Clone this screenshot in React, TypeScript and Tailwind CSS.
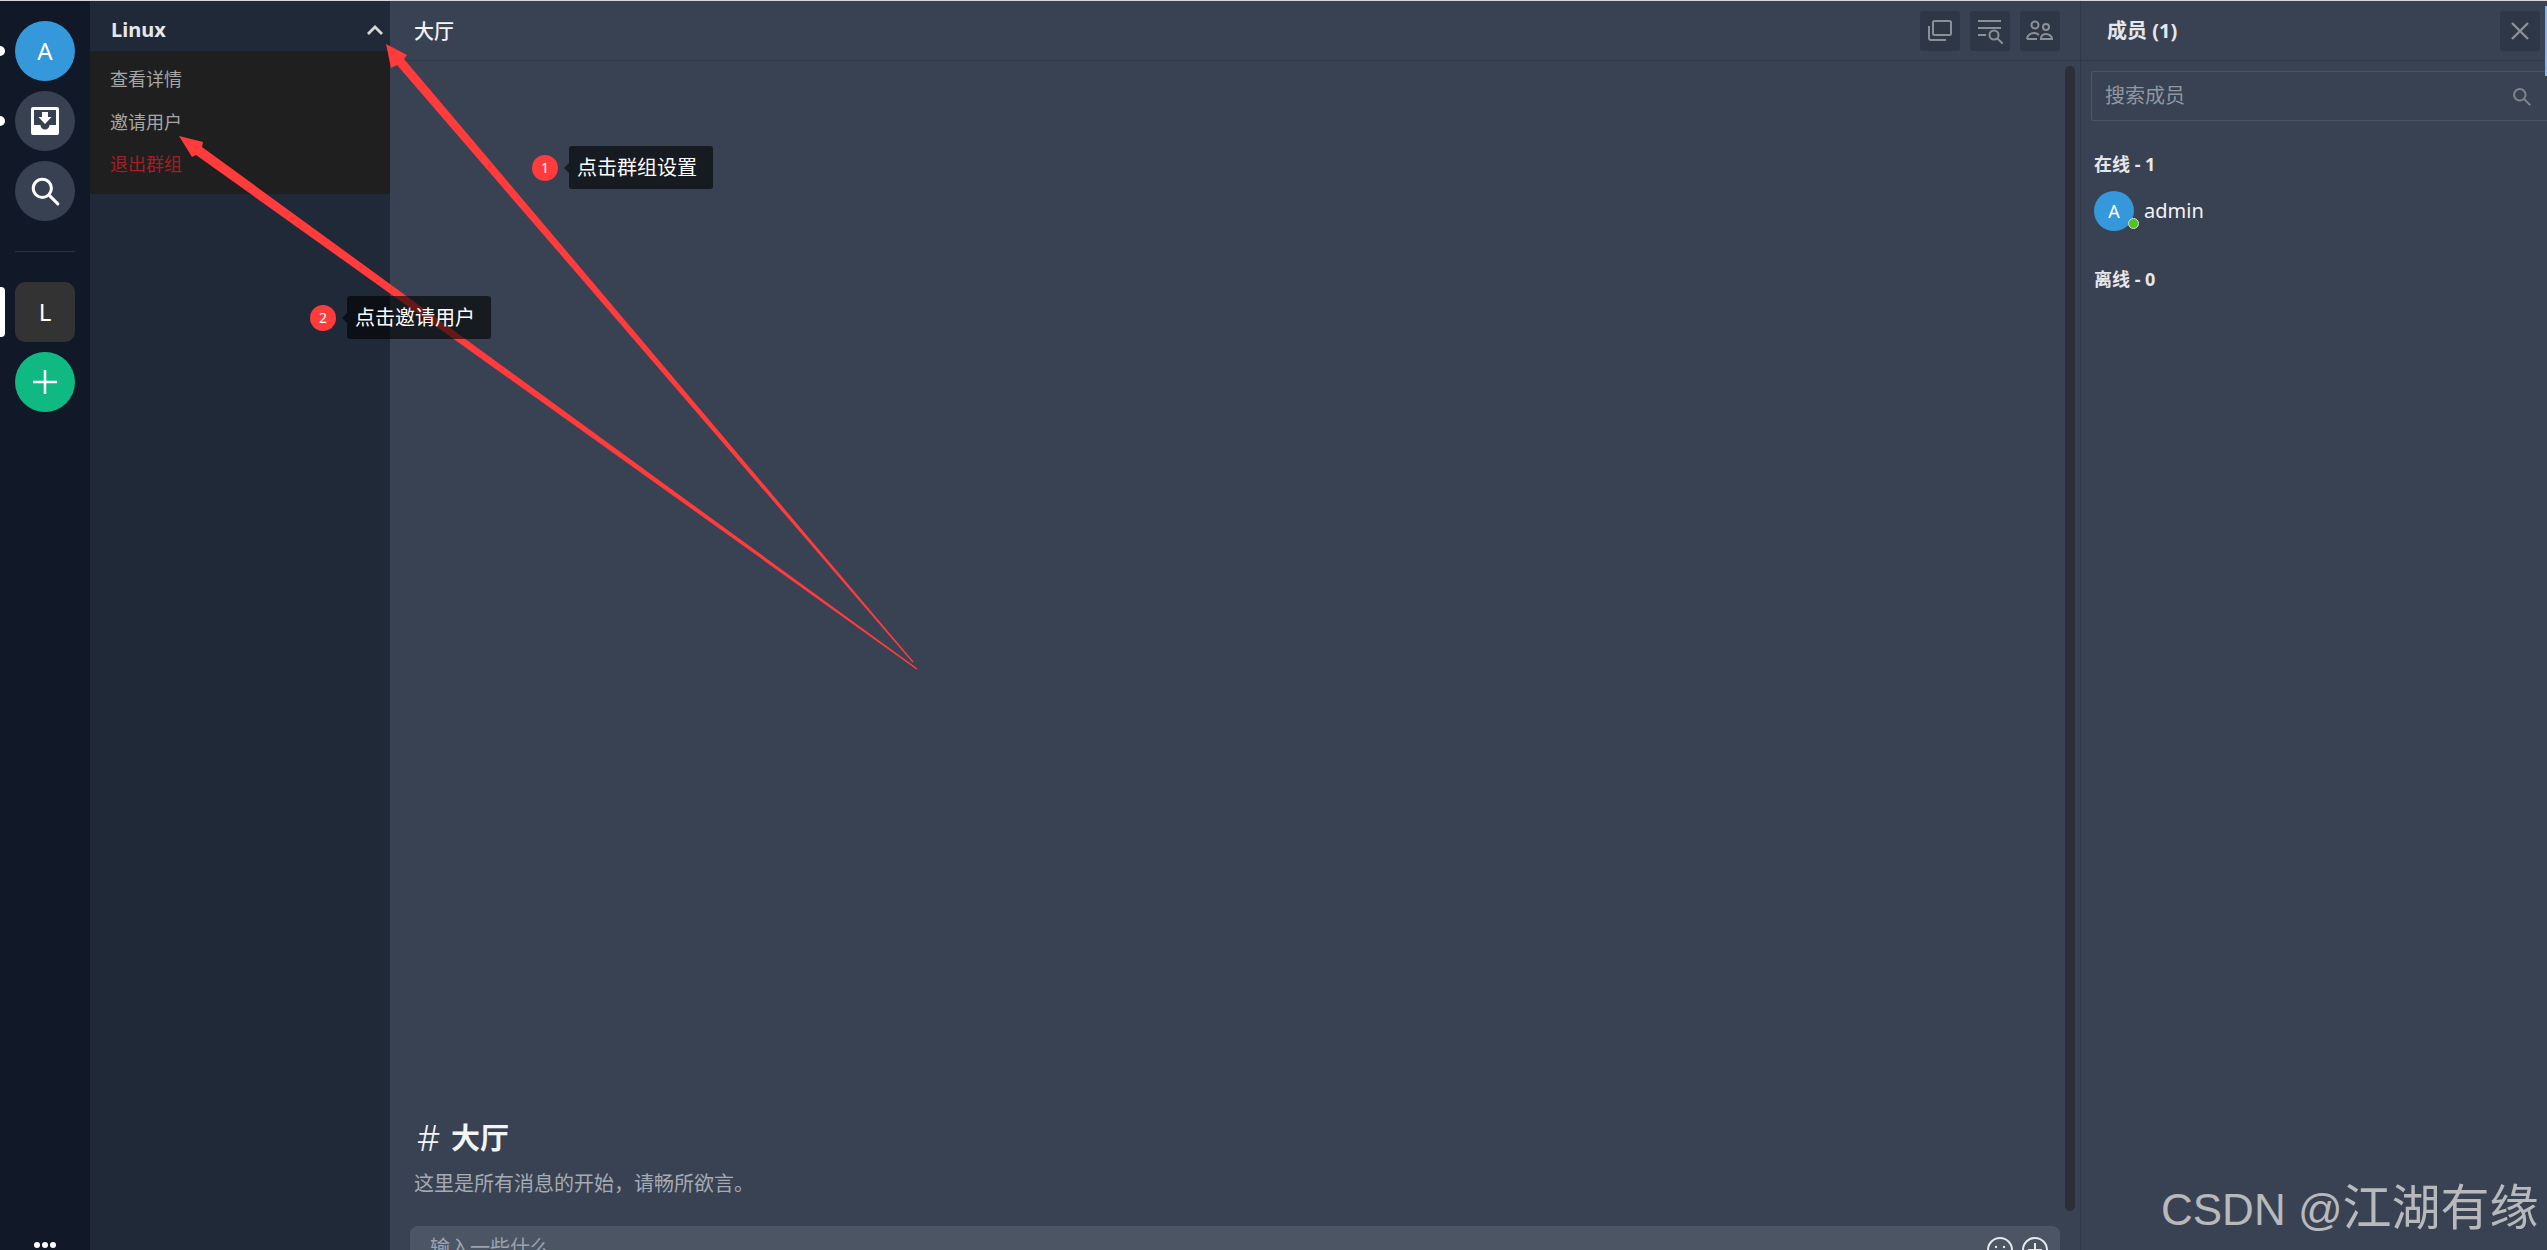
const FONT = '"Noto Sans", "Noto Sans CJK SC", sans-serif';

function InboxIcon() {
  return (
    <svg width="30" height="30" viewBox="0 0 30 30">
      <path
        fillRule="evenodd"
        fill="#fff"
        d="M3 1h24a2 2 0 0 1 2 2v24a2 2 0 0 1-2 2H3a2 2 0 0 1-2-2V3a2 2 0 0 1 2-2zM4 4v15h6.500a4.500 4.500 0 0 0 9 0H26V4zM12 6h6v5h3.500L15 18l-6.500-7H12z"
      />
    </svg>
  );
}

function SearchIcon({ size, color, width }: { size: number; color: string; width: number }) {
  return (
    <svg width={size} height={size} viewBox="0 0 28 28" fill="none" stroke={color} strokeWidth={width}>
      <circle cx="11.500" cy="11.500" r="8.500" />
      <path d="M17.800 17.800 26 26" strokeLinecap="round" />
    </svg>
  );
}

function HeaderButton({ children }: { children: React.ReactNode }) {
  return (
    <div className="flex h-10 w-10 items-center justify-center rounded-[3px] bg-[#2e3746]">{children}</div>
  );
}

function NavRail() {
  return (
    <div className="relative flex w-[90px] shrink-0 flex-col items-center bg-[#111827] pt-[21px]">
      <div className="absolute left-[-5px] top-[46px] h-2.5 w-2.5 rounded-full bg-white" />
      <div className="absolute left-[-5px] top-[116px] h-2.5 w-2.5 rounded-full bg-white" />
      <div className="absolute left-0 top-[287px] h-[50px] w-[5px] rounded-r-[4px] bg-white" />
      <div className="flex h-[60px] w-[60px] items-center justify-center rounded-full bg-[#3498db] text-[24px] text-white">
        A
      </div>
      <div className="mt-2.5 flex h-[60px] w-[60px] items-center justify-center rounded-full bg-[#374151]">
        <InboxIcon />
      </div>
      <div className="mt-2.5 flex h-[60px] w-[60px] items-center justify-center rounded-full bg-[#374151]">
        <SearchIcon size={30} color="#fff" width={2.800} />
      </div>
      <div className="mt-[30px] h-px w-[60px] bg-[#2b3444]" />
      <div className="mt-[30px] flex h-[60px] w-[60px] items-center justify-center rounded-[10px] bg-[#333333] text-[24px] text-white">
        L
      </div>
      <div className="mt-2.5 flex h-[60px] w-[60px] items-center justify-center rounded-full bg-[#10b981]">
        <svg width="24" height="24" viewBox="0 0 24 24" stroke="#fff" strokeWidth="2.500">
          <path d="M0 12h24M12 0v24" />
        </svg>
      </div>
      <div className="mt-auto mb-[2px] flex gap-[2px]">
        <div className="h-[6px] w-[6px] rounded-full bg-white" />
        <div className="h-[6px] w-[6px] rounded-full bg-white" />
        <div className="h-[6px] w-[6px] rounded-full bg-white" />
      </div>
    </div>
  );
}

function GroupSidebar() {
  return (
    <div className="relative w-[300px] shrink-0 bg-[#1f2937]">
      <div className="flex h-[60px] items-start justify-between pl-[21px] pr-[7px] pt-[16px]">
        <span className="text-[20px] leading-[28px] font-bold text-[#e5e7eb]">Linux</span>
        <svg className="mt-[9px]" width="16" height="10" viewBox="0 0 16 10" fill="none" stroke="#d8d8d8" strokeWidth="2.800">
          <path d="M1 9l7-7 7 7" />
        </svg>
      </div>
      <div className="absolute inset-x-0 top-[51px] flex h-[143px] flex-col rounded-b-[2px] bg-[#1f1f1f] pl-5 pt-[7px] text-[18px] text-[#a6a6a6]">
        <span className="leading-[43px]">查看详情</span>
        <span className="leading-[43px]">邀请用户</span>
        <span className="leading-[41px] text-[#a61d24]">退出群组</span>
      </div>
    </div>
  );
}

function ChatPanel() {
  return (
    <div className="flex min-w-0 flex-1 flex-col bg-[#394253]">
      <div className="flex h-[61px] shrink-0 items-start justify-between border-b border-[#2f3847] pl-6 pr-5 pt-[11px]">
        <span className="mt-[7px] text-[20px] leading-[28px] font-medium text-[#f3f4f6]">大厅</span>
        <div className="flex gap-2.5">
          <HeaderButton>
            <svg width="26" height="24" viewBox="0 0 26 24" fill="none" stroke="#8b8f97" strokeWidth="2">
              <rect x="6" y="2" width="18" height="14" rx="1.500" />
              <path d="M2 7v12a2 2 0 0 0 2 2h15" />
            </svg>
          </HeaderButton>
          <HeaderButton>
            <svg width="26" height="26" viewBox="0 0 26 26" fill="none" stroke="#8b8f97" strokeWidth="2">
              <path d="M1 3h23M1 10h23M1 17h8" />
              <circle cx="17" cy="17" r="4.500" />
              <path d="M20.500 20.500 25 25" strokeLinecap="round" />
            </svg>
          </HeaderButton>
          <HeaderButton>
            <svg width="28" height="24" viewBox="0 0 28 24" fill="none" stroke="#8b8f97" strokeWidth="2">
              <circle cx="9" cy="6" r="3.500" />
              <circle cx="20" cy="8" r="3" />
              <path d="M1 20c0-4 4-6 7-6s4 1 5 2M1 20h10M15 20c0-3 2-5 5-5s6 2 6 5z" />
            </svg>
          </HeaderButton>
        </div>
      </div>
      <div className="relative min-h-0 flex-1">
        <div className="absolute right-[5px] top-[5px] h-[1145px] w-2.5 rounded-[5px] bg-[#2c2f37]" />
        <div className="flex h-full flex-col justify-end pb-[28px] pl-6">
          <div className="ml-[3px] flex items-center text-[#f3f4f6]">
            <span className="w-[34px] text-[36px] leading-[36px] font-light">#</span>
            <span className="text-[29px] leading-[36px] font-bold">大厅</span>
          </div>
          <p className="mt-[14px] text-[20px] leading-[28px] text-[#a5abb5]">这里是所有消息的开始，请畅所欲言。</p>
        </div>
      </div>
      <div className="mx-5 flex h-[24px] shrink-0 items-start justify-between overflow-hidden rounded-t-[8px] bg-[#4b5563] pl-5 pr-3">
        <span className="mt-[8px] text-[20px] leading-[28px] text-[#9ca3af]">输入一些什么</span>
        <div className="mt-[11px] flex gap-[9px]">
          <svg width="26" height="26" viewBox="0 0 26 26" fill="none" stroke="#e5e7eb" strokeWidth="2">
            <circle cx="13" cy="13" r="12" />
            <circle cx="9" cy="10" r="1.200" fill="#e5e7eb" stroke="none" />
            <circle cx="17" cy="10" r="1.200" fill="#e5e7eb" stroke="none" />
          </svg>
          <svg width="26" height="26" viewBox="0 0 26 26" fill="none" stroke="#e5e7eb" strokeWidth="2">
            <circle cx="13" cy="13" r="12" />
            <path d="M13 6v14M6 13h14" />
          </svg>
        </div>
      </div>
    </div>
  );
}

function MembersPanel() {
  return (
    <div className="relative w-[467px] shrink-0 border-l border-[#2f3847] bg-[#394253]">
      <div className="absolute right-0 top-[6px] h-[70px] w-[2px] bg-[#8ab4f8]" />
      <div className="flex h-[61px] items-start justify-between border-b border-[#2f3847] pl-[26px] pr-[7px] pt-[11px]">
        <span className="mt-[6px] text-[20px] leading-[28px] font-bold text-[#e5e7eb]">成员 (1)</span>
        <div className="flex h-10 w-10 items-center justify-center rounded-[3px] bg-[#2e3746]">
          <svg width="20" height="20" viewBox="0 0 20 20" stroke="#8b8f97" strokeWidth="2.400">
            <path d="M2 2l16 16M18 2 2 18" />
          </svg>
        </div>
      </div>
      <div className="ml-[10px] mt-[10px] flex h-[50px] items-center justify-between rounded-l-[3px] border border-r-0 border-[#4b5563] pl-[13px] pr-4">
        <span className="text-[20px] leading-[28px] text-[#9097a1]">搜索成员</span>
        <SearchIcon size={19} color="#7f848c" width={3} />
      </div>
      <div className="ml-[13px] mt-[31px] text-[18px] leading-[24px] font-bold text-[#e5e7eb]">在线 - 1</div>
      <div className="ml-[13px] mt-[15px] flex items-center gap-2.5">
        <div className="relative flex h-10 w-10 items-center justify-center rounded-full bg-[#3498db] text-[18px] text-white">
          A
          <div className="absolute bottom-[2px] right-[-5px] h-[11px] w-[11px] rounded-full border border-[#d9d9d9] bg-[#52c41a]" />
        </div>
        <span className="text-[20px] leading-[28px] text-[#f3f4f6]">admin</span>
      </div>
      <div className="ml-[13px] mt-[36px] text-[18px] leading-[24px] font-bold text-[#e5e7eb]">离线 - 0</div>
    </div>
  );
}

function Callout({ n, text }: { n: number; text: string }) {
  return (
    <div className="flex items-center">
      <div className="flex h-[26px] w-[26px] items-center justify-center rounded-full bg-[#ff3b3b] text-[14px] text-white">
        {n}
      </div>
      <div className="relative ml-[11px] flex h-[43px] items-center rounded-[3px] bg-[rgba(0,0,0,0.6)] pl-2 pr-4 text-[20px] text-white">
        <div className="absolute left-[-5px] top-[17px] h-0 w-0 border-y-[5px] border-r-[5px] border-y-transparent border-r-[rgba(0,0,0,0.6)]" />
        {text}
      </div>
    </div>
  );
}

export default function App() {
  return (
    <div className="relative flex h-[1250px] w-[2547px] overflow-hidden" style={{ fontFamily: FONT }}>
      <NavRail />
      <GroupSidebar />
      <ChatPanel />
      <MembersPanel />

      {/* annotation layer: top edge, arrows, callouts, watermark */}
      <div className="absolute inset-x-0 top-0 h-px bg-[#d5d7da]" />
      <svg className="absolute inset-0" width="2547" height="1250" fill="#ff3b3b">
        <polygon points="386,44 407,55 404,59 913.500,661.500 912.500,662.500 397,65 391,68" />
        <polygon points="179,136 203,142 202,147 917.500,668.500 916.500,669.500 196,155 192,157" />
      </svg>
      <div className="absolute left-[532px] top-[146px]">
        <Callout n={1} text="点击群组设置" />
      </div>
      <div className="absolute left-[310px] top-[296px]">
        <Callout n={2} text="点击邀请用户" />
      </div>
      <div
        className="absolute left-[2161px] top-[1177px] whitespace-nowrap text-[44px] leading-[62px] text-[#b8b9bc]"
        style={{ fontFamily: '"Liberation Sans", "Noto Sans CJK SC", sans-serif' }}
      >
        CSDN @<span className="text-[49px]">江湖有缘</span>
      </div>
    </div>
  );
}
